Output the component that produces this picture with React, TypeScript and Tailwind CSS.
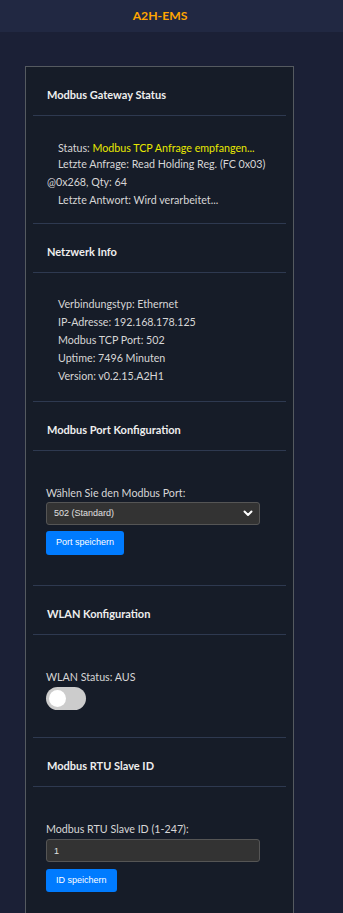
import { useState } from 'react'

const lineCls = 'h-px bg-[#2e3950]'

function SectionTitle({ title }: { title: string }) {
  return (
    <>
      <div className="pl-[14px] pt-[18px] pb-[10px] text-[11px] leading-[20px] font-bold text-[#eeeeee]">
        {title}
      </div>
      <div className={lineCls} />
    </>
  )
}

export default function App() {
  const [wlan, setWlan] = useState(false)
  const [port, setPort] = useState('502')
  const [slaveId, setSlaveId] = useState('1')

  return (
    <div className="min-h-[913px] bg-[#1b2036] font-['Lato',sans-serif] text-[10.7px] text-[#d6d6d6]">
      <header className="flex h-[32px] items-center justify-center bg-[#212842] pr-[23px]">
        <h1 className="text-[12.2px] font-bold text-[#ffa500]">A2H-EMS</h1>
      </header>

      <main className="ml-[25px] mt-[34px] w-[269px] border border-[#555a60] bg-[#161c28] px-[7px] pb-[40px]">
        <SectionTitle title="Modbus Gateway Status" />
        <div className="whitespace-nowrap pl-[14px] pt-[24px] pb-[14px]">
          <p className="indent-[11px] leading-[15px]">
            Status: <span className="text-[#e8e800]">Modbus TCP Anfrage empfangen...</span>
          </p>
          <p className="indent-[11px] leading-[18px]">
            Letzte Anfrage: Read Holding Reg. (FC 0x03)
            <br />
            @0x268, Qty: 64
          </p>
          <p className="indent-[11px] leading-[18px]">Letzte Antwort: Wird verarbeitet...</p>
        </div>
        <div className={lineCls} />

        <SectionTitle title="Netzwerk Info" />
        <div className="pl-[14px] pt-[22px] pb-[16px] leading-[18px]">
          <p className="indent-[11px]">Verbindungstyp: Ethernet</p>
          <p className="indent-[11px]">IP-Adresse: 192.168.178.125</p>
          <p className="indent-[11px]">Modbus TCP Port: 502</p>
          <p className="indent-[11px]">Uptime: 7496 Minuten</p>
          <p className="indent-[11px]">Version: v0.2.15.A2H1</p>
        </div>
        <div className={lineCls} />

        <SectionTitle title="Modbus Port Konfiguration" />
        <div className="pl-[13px] pt-[33px] pb-[30px]">
          <label className="block leading-[18px]">Wählen Sie den Modbus Port:</label>
          <div className="relative w-[214px]">
            <select
              value={port}
              onChange={(e) => setPort(e.target.value)}
              className="block h-[23px] w-full appearance-none rounded-[3px] border border-[#555] bg-[#333333] pl-[7px] font-['Liberation_Sans',sans-serif] text-[9px] text-[#e0e0e0] outline-none"
            >
              <option value="502">502 (Standard)</option>
              <option value="503">503</option>
            </select>
            <svg
              className="pointer-events-none absolute right-[7px] top-[8px] h-[7px] w-[10px]"
              viewBox="0 0 10 7"
              fill="none"
            >
              <path d="M1.5 1.5 5 5l3.5-3.5" stroke="#ffffff" strokeWidth="2" strokeLinecap="round" strokeLinejoin="round" />
            </svg>
          </div>
          <button className="mt-[6px] block h-[24px] rounded-[3px] bg-[#007bff] px-[10px] font-['Liberation_Sans',sans-serif] text-[9px] text-white">
            Port speichern
          </button>
        </div>
        <div className={lineCls} />

        <SectionTitle title="WLAN Konfiguration" />
        <div className="pl-[13px] pt-[33px] pb-[27px]">
          <p className="leading-[18px]">WLAN Status: {wlan ? 'AN' : 'AUS'}</p>
          <button
            onClick={() => setWlan(!wlan)}
            className={`relative mt-px block h-[23px] w-[40px] rounded-full ${wlan ? 'bg-[#007bff]' : 'bg-[#cccccc]'}`}
          >
            <span
              className={`absolute top-[3px] h-[17px] w-[17px] rounded-full bg-white ${wlan ? 'left-[20px]' : 'left-[3px]'}`}
            />
          </button>
        </div>
        <div className={lineCls} />

        <SectionTitle title="Modbus RTU Slave ID" />
        <div className="pl-[13px] pt-[33px]">
          <label className="block leading-[18px]">Modbus RTU Slave ID (1-247):</label>
          <input
            value={slaveId}
            onChange={(e) => setSlaveId(e.target.value)}
            className="mt-px block h-[23px] w-[214px] rounded-[3px] border border-[#555] bg-[#333333] pl-[7px] font-['Liberation_Sans',sans-serif] text-[9px] text-[#e0e0e0] outline-none"
          />
          <button className="mt-[7px] block h-[23px] rounded-[3px] bg-[#007bff] px-[10px] font-['Liberation_Sans',sans-serif] text-[9px] text-white">
            ID speichern
          </button>
        </div>
      </main>
    </div>
  )
}
